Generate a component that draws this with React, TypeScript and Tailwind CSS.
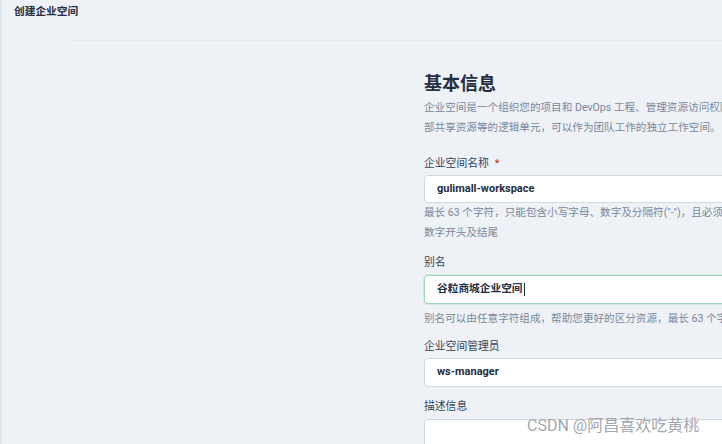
export default function App() {
  const font = { fontFamily: 'Roboto, "Noto Sans CJK SC", sans-serif' }
  return (
    <div
      className="relative h-[444px] w-[722px] overflow-hidden border-l-2 border-[#dfe4ea] bg-[#eef2f6] text-[#242e42]"
      style={font}
    >
      {/* Header */}
      <div className="h-[40px] pl-3 pt-1">
        <h1 className="text-[10.7px] font-bold leading-4 text-[#242e42]">创建企业空间</h1>
      </div>
      <div className="ml-[70px] h-px bg-[#e4e9ef]" />

      {/* Form */}
      <div className="w-[420px] pl-[422px]">
        <div className="w-[420px]">
          <h2 className="mt-[30px] text-[18px] font-bold leading-[26px] text-[#242e42]">基本信息</h2>
          <p className="mt-px whitespace-nowrap text-[10.6px] leading-5 text-[#79879c]">
            企业空间是一个组织您的项目和 DevOps 工程、管理资源访问权限以及在团队内
            <br />
            部共享资源等的逻辑单元，可以作为团队工作的独立工作空间。
          </p>

          <label className="mt-4 block text-[10.8px] leading-5 text-[#36435c]">
            企业空间名称<span className="ml-[6px] text-[#ca2621]">*</span>
          </label>
          <div className="mt-px flex h-[28px] items-center rounded-[4px] border border-[#d1d8e0] bg-white px-3 text-[11px] font-bold">
            gulimall-workspace
          </div>
          <p className="whitespace-nowrap text-[10.6px] leading-5 text-[#79879c]">
            最长 63 个字符，只能包含小写字母、数字及分隔符("-")，且必须以小写字母或
            <br />
            数字开头及结尾
          </p>

          <label className="mt-[10px] block text-[10.8px] leading-5 text-[#36435c]">别名</label>
          <div className="mt-[2px] flex h-[29px] items-center rounded-[4px] border border-[#9bd9ba] bg-white px-3 text-[10.7px] font-bold shadow-[0_0_0_1px_rgba(155,217,186,0.35)]">
            谷粒商城企业空间
            <span className="ml-px inline-block h-[13px] w-px bg-[#242e42]" />
          </div>
          <p className="mt-[5px] whitespace-nowrap text-[10.6px] leading-5 text-[#79879c]">
            别名可以由任意字符组成，帮助您更好的区分资源，最长 63 个字符。
          </p>

          <label className="mt-2 block text-[10.8px] leading-5 text-[#36435c]">企业空间管理员</label>
          <div className="mt-px flex h-[29px] items-center rounded-[4px] border border-[#d1d8e0] bg-white px-3 text-[11px] font-bold">
            ws-manager
          </div>

          <label className="mt-[10px] block text-[10.8px] leading-5 text-[#36435c]">描述信息</label>
          <div className="mt-[2px] h-[60px] rounded-[4px] border border-[#d1d8e0] bg-white" />
        </div>
      </div>

      {/* Watermark */}
      <div className="absolute left-[525px] top-[416px] whitespace-nowrap text-[16px] leading-5 text-[#a4a8ae]">
        CSDN @阿昌喜欢吃黄桃
      </div>
    </div>
  )
}
